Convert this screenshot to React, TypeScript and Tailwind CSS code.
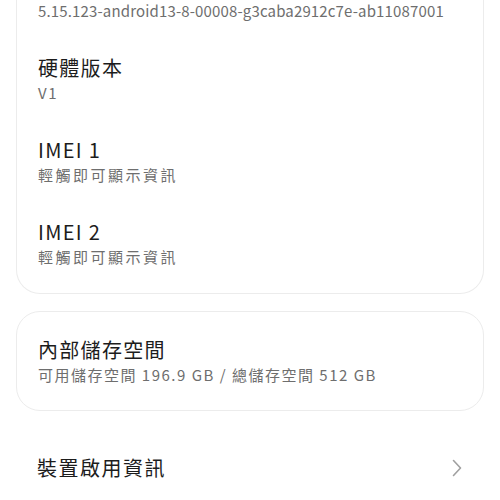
const FONT = { fontFamily: '"Noto Sans CJK TC", "Noto Sans", sans-serif' };

type Item = { title?: string; value: string; track: string };

const deviceItems: Item[] = [
  { value: "5.15.123-android13-8-00008-g3caba2912c7e-ab11087001", track: "tracking-[0.15px]" },
  { title: "硬體版本", value: "V1", track: "tracking-[1.5px]" },
  { title: "IMEI 1", value: "輕觸即可顯示資訊", track: "tracking-[2.5px]" },
  { title: "IMEI 2", value: "輕觸即可顯示資訊", track: "tracking-[2.5px]" },
];

function Row({ title, value, track }: Item) {
  return (
    <div className={title ? "px-[21px] py-4" : "px-[21px] pb-4"}>
      {title && <p className="text-[20px] leading-[28px] tracking-[1.3px] text-[#1c1c1c]">{title}</p>}
      <p className={`whitespace-nowrap text-[15px] leading-[22px] text-[#6e6e6e] ${track}`}>{value}</p>
    </div>
  );
}

export default function App() {
  return (
    <div className="w-[500px] h-[500px] overflow-hidden bg-white" style={FONT}>
      <div className="mx-4 rounded-b-[24px] border border-t-0 border-[#ececec] pb-[9px]">
        {deviceItems.map((it, i) => (
          <Row key={i} {...it} />
        ))}
      </div>

      <div className="mx-4 mt-[17px] rounded-[24px] border border-[#ececec] py-2">
        <Row title="內部儲存空間" value="可用儲存空間 196.9 GB / 總儲存空間 512 GB" track="tracking-[1.5px]" />
      </div>

      <div className="mx-4 mt-[43px] flex items-center justify-between px-[21px]">
        <p className="text-[20px] leading-[28px] tracking-[1.5px] text-[#1c1c1c]">裝置啟用資訊</p>
        <svg width="10" height="18" viewBox="0 0 10 18" fill="none" className="mr-[1px]">
          <path d="M1.5 1.5 L8.5 9 L1.5 16.5" stroke="#a0a0a0" strokeWidth="1.6" strokeLinecap="round" strokeLinejoin="round" />
        </svg>
      </div>
    </div>
  );
}
